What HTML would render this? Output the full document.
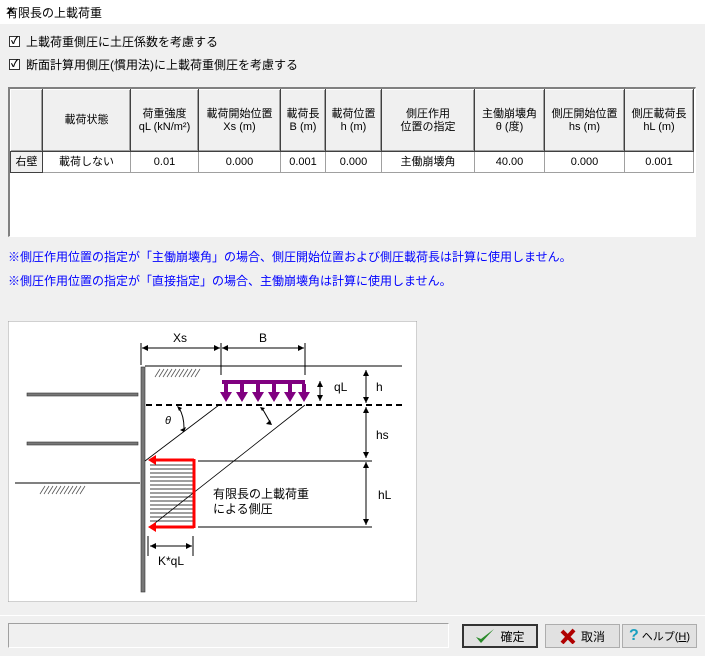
<!DOCTYPE html>
<html><head><meta charset="utf-8"><style>
*{margin:0;padding:0;box-sizing:border-box}
body{width:705px;height:656px;background:#f0f0f0;font-family:"Liberation Sans","Noto Sans CJK JP",sans-serif;font-size:12px;color:#000;position:relative;overflow:hidden}
.abs{position:absolute}
.title{left:0;top:0;width:705px;height:24px;background:#fff;}
.title span{position:absolute;left:6px;top:4px;font-size:12px}
.close{position:absolute;right:10px;top:2px;font-size:16px}
.cb{width:11px;height:11px;border:1px solid #333;background:#fff;font-size:10px;line-height:9px;text-align:center;font-weight:bold}
table{border-collapse:collapse;position:absolute;left:10px;top:89px;font-size:11px}
td{border:1px solid #a0a0a0;text-align:center;line-height:13px;background:#fff}
.hd td{height:62px;background:#f0f0f0;border:1px solid #404040;border-top-color:#fff;border-left-color:#fff;box-shadow:inset -1px -1px 0 #a0a0a0}
td.rh{background:#f0f0f0;border:1px solid #404040}
.grid{left:8px;top:87px;width:688px;height:150px;border:1px solid #fff;border-top:2px solid #808080;border-left:2px solid #808080;background:#fff}
.note{color:#0000ff;font-size:12px}
.btn{height:24px;top:624px;border:1px solid #adadad;background:#e1e1e1;font-size:12px;display:flex;align-items:center;justify-content:center;gap:5px;white-space:nowrap}
</style></head><body>
<div class="abs title"><span>有限長の上載荷重</span><span class="close">✕</span></div>
<div class="abs cb" style="left:9px;top:36px">✓</div><div class="abs" style="left:26px;top:33px">上載荷重側圧に土圧係数を考慮する</div>
<div class="abs cb" style="left:9px;top:59px">✓</div><div class="abs" style="left:26px;top:56px">断面計算用側圧(慣用法)に上載荷重側圧を考慮する</div>
<div class="abs grid"></div>
<table>
<tr class="hd"><td style="width:32px"></td><td style="width:88px">載荷状態</td><td style="width:68px">荷重強度<br>qL (kN/m²)</td><td style="width:82px">載荷開始位置<br>Xs (m)</td><td style="width:45px">載荷長<br>B (m)</td><td style="width:56px">載荷位置<br>h (m)</td><td style="width:93px">側圧作用<br>位置の指定</td><td style="width:70px">主働崩壊角<br>θ (度)</td><td style="width:80px">側圧開始位置<br>hs (m)</td><td style="width:69px">側圧載荷長<br>hL (m)</td></tr>
<tr style="height:21px"><td class="rh">右壁</td><td>載荷しない</td><td>0.01</td><td>0.000</td><td>0.001</td><td>0.000</td><td>主働崩壊角</td><td>40.00</td><td>0.000</td><td>0.001</td></tr>
</table>
<div class="abs note" style="left:8px;top:248px">※側圧作用位置の指定が「主働崩壊角」の場合、側圧開始位置および側圧載荷長は計算に使用しません。</div>
<div class="abs note" style="left:8px;top:272px">※側圧作用位置の指定が「直接指定」の場合、主働崩壊角は計算に使用しません。</div>
<svg class="abs" style="left:8px;top:321px" width="409" height="281" viewBox="8 321 409 281">
<defs><marker id="a" viewBox="0 0 10 10" refX="10" refY="5" markerWidth="6" markerHeight="6" orient="auto-start-reverse"><path d="M0,0L10,5L0,10z" fill="#000"/></marker></defs>
<rect x="8" y="321" width="409" height="281" fill="#fff" stroke="#a0a0a0"/>
<rect x="141" y="367" width="4" height="225" fill="#777" stroke="#333" stroke-width=".6"/>
<rect x="27" y="393" width="111" height="3" fill="#777" stroke="#333" stroke-width=".6"/>
<rect x="27" y="442" width="111" height="3" fill="#777" stroke="#333" stroke-width=".6"/>
<line x1="145" y1="366" x2="402" y2="366" stroke="#000"/>
<line x1="15" y1="483" x2="140" y2="483" stroke="#000"/>
<line x1="146" y1="405" x2="402" y2="405" stroke="#000" stroke-width="2" stroke-dasharray="6,4"/>
<g stroke="#555" stroke-width=".8"><path d="M155,377l5,-8M159,377l5,-8M163,377l5,-8M167,377l5,-8M171,377l5,-8M175,377l5,-8M179,377l5,-8M183,377l5,-8M187,377l5,-8M191,377l5,-8M195,377l5,-8"/>
<path d="M40,494l5,-8M44,494l5,-8M48,494l5,-8M52,494l5,-8M56,494l5,-8M60,494l5,-8M64,494l5,-8M68,494l5,-8M72,494l5,-8M76,494l5,-8M80,494l5,-8"/></g>
<line x1="142" y1="348" x2="220" y2="348" stroke="#000" marker-start="url(#a)" marker-end="url(#a)"/>
<line x1="222" y1="348" x2="304" y2="348" stroke="#000" marker-start="url(#a)" marker-end="url(#a)"/>
<line x1="141" y1="343" x2="141" y2="365" stroke="#000"/><line x1="221" y1="343" x2="221" y2="375" stroke="#000"/><line x1="305" y1="343" x2="305" y2="375" stroke="#000"/>
<text x="173" y="342" font-size="12">Xs</text><text x="259" y="342" font-size="12">B</text>
<rect x="222" y="380" width="83" height="4" fill="#800080"/>
<g fill="#800080"><path d="M224,384h4v8h4l-6,10l-6,-10h4z"/><path d="M240,384h4v8h4l-6,10l-6,-10h4z"/><path d="M256,384h4v8h4l-6,10l-6,-10h4z"/><path d="M272,384h4v8h4l-6,10l-6,-10h4z"/><path d="M288,384h4v8h4l-6,10l-6,-10h4z"/><path d="M302,384h4v8h4l-6,10l-6,-10h4z"/></g>
<line x1="320" y1="381" x2="320" y2="401" stroke="#000" marker-start="url(#a)" marker-end="url(#a)"/>
<text x="334" y="391" font-size="12">qL</text>
<line x1="366" y1="370" x2="366" y2="403" stroke="#000" marker-start="url(#a)" marker-end="url(#a)"/>
<text x="376" y="391" font-size="12">h</text>
<line x1="366" y1="407" x2="366" y2="458" stroke="#000" marker-start="url(#a)" marker-end="url(#a)"/>
<text x="376" y="439" font-size="12">hs</text>
<line x1="366" y1="462" x2="366" y2="525" stroke="#000" marker-start="url(#a)" marker-end="url(#a)"/>
<text x="378" y="499" font-size="12">hL</text>
<line x1="198" y1="461" x2="372" y2="461" stroke="#000"/><line x1="198" y1="527" x2="372" y2="527" stroke="#000"/>
<g stroke="#000" stroke-width=".8"><path d="M150,465h43M150,469h43M150,473h43M150,477h43M150,481h43M150,485h43M150,489h43M150,493h43M150,497h43M150,501h43M150,505h43M150,509h43M150,513h43M150,517h43M150,521h43"/></g>
<line x1="219" y1="405" x2="145" y2="461" stroke="#000" stroke-width=".8"/>
<line x1="305" y1="405" x2="150" y2="527" stroke="#000" stroke-width=".8"/>
<path d="M194,460h-42M194,459v69M194,527h-42" fill="none" stroke="red" stroke-width="3" />
<path d="M148,460l8,-5v10z M148,527l8,-5v10z" fill="red"/>
<path d="M179,408q5,8 5,20" fill="none" stroke="#000"/><path d="M180,430l6,-3l-2,5z" fill="#000"/><path d="M177,406l5,2l-3,3z" fill="#000"/>
<path d="M262,408q4,7 8,14" fill="none" stroke="#000"/><path d="M272,425l-6,-1l4,-4z" fill="#000"/><path d="M260,407l5,1l-3,3z" fill="#000"/>
<text x="165" y="424" font-size="11" font-style="italic">θ</text>
<line x1="150" y1="546" x2="192" y2="546" stroke="#000" marker-start="url(#a)" marker-end="url(#a)"/>
<line x1="148" y1="536" x2="148" y2="556" stroke="#000"/><line x1="193" y1="536" x2="193" y2="556" stroke="#000"/>
<text x="158" y="565" font-size="12">K*qL</text>
<text x="213" y="498" font-size="12">有限長の上載荷重</text>
<text x="213" y="513" font-size="12">による側圧</text>
</svg>
<div class="abs" style="left:0;top:615px;width:705px;height:1px;background:#fff"></div>
<div class="abs" style="left:8px;top:623px;width:441px;height:25px;border:1px solid #a0a0a0;border-right-color:#fff;border-bottom-color:#fff"></div>
<div class="abs btn" style="left:462px;width:76px;border:2px solid #333"><svg width="20" height="16"><path d="M1,9l5,6l13,-14l-13,10z" fill="#2a8a2a"/></svg>確定</div>
<div class="abs btn" style="left:545px;width:75px"><svg width="16" height="16"><path d="M2,3l12,12M14,2l-12,13" stroke="#b00000" stroke-width="4"/></svg>取消</div>
<div class="abs btn" style="left:622px;width:75px;gap:3px;font-size:11px"><span style="color:#1aa0c0;font-weight:bold;font-size:16px">?</span><span>ヘルプ(<u>H</u>)</span></div>
</body></html>
